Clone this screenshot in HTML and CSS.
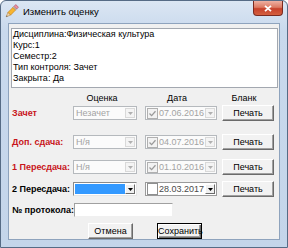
FILE: index.html
```html
<!DOCTYPE html>
<html>
<head>
<meta charset="utf-8">
<link rel="stylesheet" href="styles.css">
</head>
<body>
<div class="window">
  <div class="titlebar">
    <svg class="app-icon" viewBox="0 0 16 16" width="15" height="15">
      <g transform="rotate(45 8 8)">
        <rect x="6" y="-0.5" width="4" height="3" fill="#ec8ea0" stroke="#a34a5a" stroke-width="0.6"/>
        <rect x="6" y="2.5" width="4" height="1.4" fill="#c4c4c4" stroke="#808080" stroke-width="0.4"/>
        <rect x="6" y="3.9" width="4" height="7.6" fill="#f7b530" stroke="#c0780e" stroke-width="0.6"/>
        <path d="M6 11.5 L10 11.5 L8 16 Z" fill="#f3d6a4" stroke="#a87a40" stroke-width="0.5"/>
        <path d="M7.35 14.5 L8.65 14.5 L8 16 Z" fill="#333"/>
      </g>
    </svg>
    <span class="title">Изменить оценку</span>
    <div class="close">
      <svg viewBox="0 0 8 7" width="8" height="7"><path d="M1 0.8 L7 6.2 M7 0.8 L1 6.2" stroke="#fff" stroke-width="1.8"/></svg>
    </div>
  </div>
  <div class="client">
    <div class="memo">
      <div>Дисциплина:Физическая культура</div>
      <div>Курс:1</div>
      <div>Семестр:2</div>
      <div>Тип контроля: Зачет</div>
      <div>Закрыта: Да</div>
    </div>

    <div class="head-row">
      <span class="h-grade">Оценка</span>
      <span class="h-date">Дата</span>
      <span class="h-form">Бланк</span>
    </div>

    <div class="row r1">
      <span class="lbl red">Зачет</span>
      <div class="combo disabled"><span class="val">Незачет</span><span class="arrow"><svg viewBox="0 0 5 3" width="5" height="3"><path d="M0 0H5L2.5 3Z"/></svg></span></div>
      <div class="dtp disabled"><span class="chk checked"><svg viewBox="0 0 7 7" width="7" height="7"><path d="M0.5 3.5 L2.6 5.6 L6.5 1.2" fill="none" stroke-width="1.3"/></svg></span><span class="val">07.06.2016</span><span class="arrow"><svg viewBox="0 0 5 3" width="5" height="3"><path d="M0 0H5L2.5 3Z"/></svg></span></div>
      <button class="btn">Печать</button>
    </div>

    <div class="row r2">
      <span class="lbl red">Доп. сдача:</span>
      <div class="combo disabled"><span class="val">Н/я</span><span class="arrow"><svg viewBox="0 0 5 3" width="5" height="3"><path d="M0 0H5L2.5 3Z"/></svg></span></div>
      <div class="dtp disabled"><span class="chk checked"><svg viewBox="0 0 7 7" width="7" height="7"><path d="M0.5 3.5 L2.6 5.6 L6.5 1.2" fill="none" stroke-width="1.3"/></svg></span><span class="val">04.07.2016</span><span class="arrow"><svg viewBox="0 0 5 3" width="5" height="3"><path d="M0 0H5L2.5 3Z"/></svg></span></div>
      <button class="btn">Печать</button>
    </div>

    <div class="row r3">
      <span class="lbl red">1 Пересдача:</span>
      <div class="combo disabled"><span class="val">Н/я</span><span class="arrow"><svg viewBox="0 0 5 3" width="5" height="3"><path d="M0 0H5L2.5 3Z"/></svg></span></div>
      <div class="dtp disabled"><span class="chk checked"><svg viewBox="0 0 7 7" width="7" height="7"><path d="M0.5 3.5 L2.6 5.6 L6.5 1.2" fill="none" stroke-width="1.3"/></svg></span><span class="val">01.10.2016</span><span class="arrow"><svg viewBox="0 0 5 3" width="5" height="3"><path d="M0 0H5L2.5 3Z"/></svg></span></div>
      <button class="btn">Печать</button>
    </div>

    <div class="row r4">
      <span class="lbl">2 Пересдача:</span>
      <div class="combo active"><span class="sel"></span><span class="arrow"><svg viewBox="0 0 5 3" width="5" height="3"><path d="M0 0H5L2.5 3Z"/></svg></span></div>
      <div class="dtp active"><span class="chk"></span><span class="val">28.03.2017</span><span class="arrow"><svg viewBox="0 0 5 3" width="5" height="3"><path d="M0 0H5L2.5 3Z"/></svg></span></div>
      <button class="btn">Печать</button>
    </div>

    <div class="row proto">
      <span class="lbl">№ протокола:</span>
      <div class="edit"></div>
    </div>

    <div class="actions">
      <button class="btn act">Отмена</button>
      <button class="btn act default">Сохранить</button>
    </div>
  </div>
</div>
</body>
</html>
```

FILE: styles.css
```css
* { box-sizing: border-box; }
html, body { margin: 0; padding: 0; }
body {
  width: 288px;
  height: 248px;
  overflow: hidden;
  background: #ffffff;
  font-family: "Liberation Sans", Arial, sans-serif;
  font-size: 9px;
  color: #000;
}
.window {
  width: 288px;
  height: 248px;
  border: 1px solid #566b85;
  border-radius: 6px 6px 0 0;
  background: linear-gradient(#dbe6f3 0, #c9d9ed 30px, #c4d5ea 100%);
  display: flex;
  flex-direction: column;
}
.titlebar {
  height: 22px;
  flex-shrink: 0;
  display: flex;
  align-items: flex-start;
}
.app-icon { margin: 3px 0 0 3px; flex-shrink: 0; }
.title {
  margin: 5px 0 0 4px;
  font-size: 9.5px;
  line-height: 11px;
  color: #000;
}
.close {
  margin-left: auto;
  margin-right: 4px;
  width: 30px;
  height: 15px;
  border: 1px solid #7a2a20;
  border-top: none;
  border-radius: 0 0 4px 4px;
  background: linear-gradient(#eeb0a2 0, #dc7a63 45%, #c7412b 55%, #d4603f 100%);
  display: flex;
  align-items: center;
  justify-content: center;
}
.client {
  margin: 0 7px 7px 7px;
  flex: 1;
  background: #f0f0f0;
  border: 1px solid #8ea3bd;
  display: flex;
  flex-direction: column;
}
.memo {
  margin: 4px 1px 0 2px;
  height: 60px;
  background: #fff;
  border: 1px solid #a3a8b0;
  padding: 0 1px;
  line-height: 11px;
  font-size: 9px;
}
.head-row {
  margin-top: 4px;
  height: 12px;
  line-height: 12px;
  display: flex;
}
.head-row span { text-align: center; }
.h-grade { margin-left: 64px; width: 58px; }
.h-date { margin-left: 14px; width: 64px; }
.h-form { margin-left: 13px; width: 44px; }

.row {
  height: 18px;
  display: flex;
  align-items: center;
  padding-left: 3px;
}
.r2 { margin-top: 11px; }
.r3 { margin-top: 7px; }
.r4 { margin-top: 4px; }
.proto { margin-top: 3px; }

.lbl {
  width: 61px;
  flex-shrink: 0;
  font-weight: bold;
  white-space: nowrap;
}
.red { color: #c8141a; }

.combo, .dtp {
  height: 14px;
  display: flex;
  align-items: center;
  flex-shrink: 0;
}
.combo { width: 64px; }
.dtp { width: 72px; margin-left: 8px; }
.combo .val, .dtp .val { flex: 1; line-height: 12px; }
.combo .val { padding-left: 2px; }
.dtp .val { padding-left: 1px; }

.disabled {
  background: #fbfbfb;
  border: 1px solid #b5b9bd;
  color: #a3a3a3;
}
.disabled .arrow {
  width: 10px;
  height: 10px;
  margin-right: 1px;
  border: 1px solid #d9d9d9;
  background: #f4f4f4;
  display: flex;
  align-items: center;
  justify-content: center;
}
.disabled .arrow svg { fill: #b0b0b0; }

.chk {
  width: 11px;
  height: 11px;
  margin-left: 1px;
  flex-shrink: 0;
  display: flex;
  align-items: center;
  justify-content: center;
}
.disabled .chk { border: 1px solid #b0b0b0; background: #f2f2f2; }
.disabled .chk svg { stroke: #9a9a9a; }

.active.combo {
  border-style: solid;
  border-width: 1px;
  border-color: #8a8a8a #e6e6e6 #e6e6e6 #8a8a8a;
  background: #fff;
  padding: 1px;
}
.active .sel { flex: 1; height: 100%; background: #3399ff; }
.active .arrow {
  width: 10px;
  height: 100%;
  background: #f0f0f0;
  border-style: solid;
  border-width: 1px;
  border-color: #fff #6a6a6a #6a6a6a #fff;
  display: flex;
  align-items: center;
  justify-content: center;
}
.active .arrow svg { fill: #000; }
.active.dtp {
  border: 1px solid #9a9a9a;
  background: #fff;
  color: #4a4a4a;
  padding: 1px 1px 1px 0;
}
.active .chk { border: 1px solid #8e8f8f; background: #fff; height: 12px; margin-left: 1px; }

.btn {
  margin: 0;
  padding: 0;
  font-family: "Liberation Sans", Arial, sans-serif;
  font-size: 9px;
  color: #000;
  background: #f2f2f2;
  border-style: solid;
  border-width: 1px;
  border-color: #ffffff #6a6a6a #6a6a6a #ffffff;
  box-shadow: inset -1px -1px 0 #a0a0a0;
  flex-shrink: 0;
}
.row .btn {
  width: 52px;
  height: 16px;
  margin-left: 5px;
}
.edit {
  margin-left: 1px;
  width: 99px;
  height: 14px;
  background: #fff;
  border-style: solid;
  border-width: 1px;
  border-color: #a0a0a0 #f0f0f0 #f0f0f0 #a0a0a0;
}
.actions {
  margin-top: 4px;
  display: flex;
  padding-left: 79px;
}
.act {
  width: 45px;
  height: 16px;
}
.act + .act { margin-left: 24px; }
.default {
  border: 1px solid #000;
  box-shadow: inset 1px 1px 0 #fff, inset -1px -1px 0 #6a6a6a, inset -2px -2px 0 #a0a0a0;
}
```
